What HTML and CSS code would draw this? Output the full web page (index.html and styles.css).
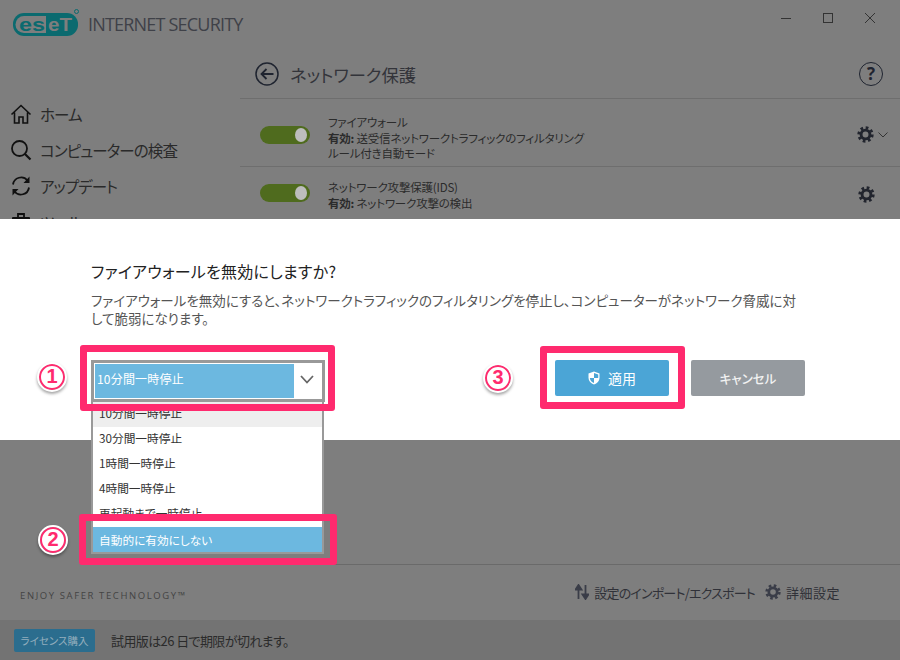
FILE: index.html
```html
<!DOCTYPE html>
<html lang="ja">
<head>
<meta charset="utf-8">
<title>ESET Internet Security</title>
<link rel="stylesheet" href="styles.css">
</head>
<body>
<svg class="defs" width="0" height="0" aria-hidden="true">
  <symbol id="gear" viewBox="0 0 20 20">
    <circle cx="10" cy="10" r="5.2" fill="none" stroke="currentColor" stroke-width="3.4"/>
    <circle cx="10" cy="10" r="8" fill="none" stroke="currentColor" stroke-width="3.2" stroke-dasharray="3.2 3.08"/>
  </symbol>
</svg>
<div class="app">
  <header class="titlebar">
    <svg class="logo" viewBox="0 0 68 28" width="68" height="28">
      <rect x="0" y="4" width="65" height="23" rx="11" fill="#0b6a6f"/>
      <path d="M11 7 H33 V24 H11 A8.500 8.500 0 0 1 11 7 Z" fill="#7e7e7e"/>
      <text class="logo-text" x="6" y="21.500" fill="#0b6a6f" textLength="26" lengthAdjust="spacingAndGlyphs">es</text>
      <text class="logo-text" x="35" y="21.500" fill="#7e7e7e" textLength="24" lengthAdjust="spacingAndGlyphs">eT</text>
      <circle cx="63.500" cy="2.500" r="2" fill="none" stroke="#0b6a6f" stroke-width="1"/>
    </svg>
    <span class="product">INTERNET SECURITY</span>
    <div class="winctl">
      <svg width="12" height="12" viewBox="0 0 12 12"><path d="M1 6.500H11" stroke="#333" fill="none"/></svg>
      <svg width="12" height="12" viewBox="0 0 12 12"><rect x="1.500" y="1.500" width="9" height="9" stroke="#333" fill="none"/></svg>
      <svg width="12" height="12" viewBox="0 0 12 12"><path d="M1 1L11 11M11 1L1 11" stroke="#333" fill="none"/></svg>
    </div>
  </header>
  <div class="middle">
    <nav class="sidebar">
      <div class="nav-item">
        <svg class="nav-icon" viewBox="0 0 22 22"><path d="M1.500 11.500L11 2.500L20.500 11.500M4.500 9.500V20H9V14H13V20H17.500V9.500" fill="none" stroke="#111" stroke-width="1.600"/></svg>
        <span>ホーム</span>
      </div>
      <div class="nav-item">
        <svg class="nav-icon" viewBox="0 0 22 22"><circle cx="9.500" cy="9.500" r="7.500" fill="none" stroke="#111" stroke-width="1.800"/><path d="M15 15L20.500 20.500" stroke="#111" stroke-width="2.200"/></svg>
        <span>コンピューターの検査</span>
      </div>
      <div class="nav-item">
        <svg class="nav-icon" viewBox="0 0 22 22"><path d="M3 9.500A8.200 8.200 0 0 1 17.500 5.500M19 12.500A8.200 8.200 0 0 1 4.500 16.500" fill="none" stroke="#111" stroke-width="1.800"/><path d="M19.500 1.500V8H13.500ZM2.500 20.500V14H8.500Z" fill="#111"/></svg>
        <span>アップデート</span>
      </div>
      <div class="nav-item">
        <svg class="nav-icon" viewBox="0 0 22 22"><rect x="2" y="6" width="18" height="13" rx="1" fill="#111"/><path d="M8 6V3H14V6" fill="none" stroke="#111" stroke-width="1.800"/></svg>
        <span>ツール</span>
      </div>
    </nav>
    <main class="content">
      <div class="page-head">
        <svg class="round-icon" viewBox="0 0 24 24"><circle cx="12" cy="12" r="11" fill="none" stroke="#1f2430" stroke-width="1.500"/><path d="M18.500 12H6.500M11.500 7L6.500 12L11.500 17" fill="none" stroke="#1f2430" stroke-width="1.800"/></svg>
        <h1 class="page-title">ネットワーク保護</h1>
        <span class="help">?</span>
      </div>
      <section class="row row-first">
        <span class="toggle"><span class="knob"></span></span>
        <div class="row-text">
          <div>ファイアウォール</div>
          <div><b>有効:</b> 送受信ネットワークトラフィックのフィルタリング</div>
          <div>ルール付き自動モード</div>
        </div>
        <svg class="row-gear"><use href="#gear"/></svg>
        <svg class="row-chevron" viewBox="0 0 10 6"><path d="M0.500 0.500L5 5L9.500 0.500" fill="none" stroke="#333"/></svg>
      </section>
      <section class="row row-second">
        <span class="toggle"><span class="knob"></span></span>
        <div class="row-text">
          <div>ネットワーク攻撃保護(IDS)</div>
          <div><b>有効:</b> ネットワーク攻撃の検出</div>
        </div>
        <svg class="row-gear gear-solo"><use href="#gear"/></svg>
      </section>
    </main>
  </div>
  <div class="promo">
    <span class="tagline">ENJOY SAFER TECHNOLOGY™</span>
    <div class="promo-links">
      <svg class="arrows" viewBox="0 0 14 16"><path d="M3.500 15V5M0.500 5.500L3.500 1L6.500 5.500ZM10.500 1V11M7.500 10.500L10.500 15L13.500 10.500Z" fill="#3a3d48" stroke="#3a3d48" stroke-width="1.800"/></svg>
      <span class="link-import">設定のインポート/エクスポート</span>
      <svg class="promo-gear"><use href="#gear"/></svg>
      <span class="link-advanced">詳細設定</span>
    </div>
  </div>
  <div class="status">
    <span class="buy">ライセンス購入</span>
    <span class="trial">試用版は26 日で期限が切れます。</span>
  </div>

  <div class="dialog">
    <h2 class="dialog-title">ファイアウォールを無効にしますか?</h2>
    <p class="dialog-body">ファイアウォールを無効にすると、ネットワークトラフィックのフィルタリングを停止し、コンピューターがネットワーク脅威に対して脆弱になります。</p>
    <div class="controls">
      <div class="select">
        <div class="select-value">10分間一時停止</div>
        <svg class="select-chevron" viewBox="0 0 14 9"><path d="M1 1L7 7.500L13 1" fill="none" stroke="#666" stroke-width="1.800"/></svg>
        <ul class="options">
          <li class="opt-hover">10分間一時停止</li>
          <li>30分間一時停止</li>
          <li>1時間一時停止</li>
          <li>4時間一時停止</li>
          <li>再起動まで一時停止</li>
          <li class="opt-selected">自動的に有効にしない</li>
        </ul>
      </div>
      <div class="buttons">
        <button class="btn btn-apply">
          <svg class="shield" viewBox="0 0 12 14"><path d="M6 0.500L11.500 2.500V6.500C11.500 10 9 12.500 6 13.500C3 12.500 0.500 10 0.500 6.500V2.500Z" fill="#fff"/><path d="M6 2V7H1.800C2 9.500 4 11.200 6 12V7H10.200C10.300 6 10.300 4.500 10.200 3.500Z" fill="#4ba5d6"/></svg>
          適用
        </button>
        <button class="btn btn-cancel">キャンセル</button>
      </div>
    </div>
  </div>

  <div class="mark mark-1"></div>
  <div class="mark mark-2"></div>
  <div class="mark mark-3"></div>
  <span class="badge badge-1">1</span>
  <span class="badge badge-2">2</span>
  <span class="badge badge-3">3</span>
</div>
</body>
</html>
```
FILE: styles.css
```css
* { box-sizing: border-box; }
html, body { margin: 0; padding: 0; }
body {
  font-family: "Noto Sans CJK JP", "Noto Sans", sans-serif;
  font-feature-settings: "palt";
  overflow: hidden;
}
.defs { position: absolute; }
.app {
  position: relative;
  width: 900px;
  height: 660px;
  background: #7e7e7e;
  display: flex;
  flex-direction: column;
  color: #2b2b2b;
  overflow: hidden;
}
.titlebar {
  height: 50px;
  display: flex;
  align-items: flex-start;
  padding: 9px 24px 0 13px;
  flex: none;
}
.logo { flex: none; }
.logo-text { font: bold 19px "Liberation Sans", sans-serif; }
.product {
  margin-left: 7px;
  padding-top: 3px;
  font: 400 18px/24px "Open Sans", sans-serif;
  letter-spacing: -0.8px;
  color: #3f4148;
}
.winctl {
  margin-left: auto;
  display: flex;
  gap: 30px;
  padding-top: 3px;
}
.middle { flex: 1; display: flex; min-height: 0; }
.sidebar {
  width: 240px;
  flex: none;
  padding: 46px 0 0 10px;
}
.nav-item {
  height: 36px;
  display: flex;
  align-items: center;
  gap: 8px;
  font-size: 15.500px;
  letter-spacing: -0.9px;
  color: #2a2a2a;
}
.nav-icon { width: 22px; height: 22px; flex: none; }
.content {
  flex: 1;
  border-bottom: 1px solid #6a6a6a;
}
.page-head {
  height: 49px;
  display: flex;
  align-items: center;
  padding: 0 17px 0 15px;
  border-bottom: 1px solid #6e6e6e;
}
.round-icon { width: 24px; height: 24px; flex: none; }
.page-title {
  margin: 0 0 0 11px;
  font-size: 17.300px;
  font-weight: 400;
  color: #33343a;
  flex: 1;
}
.help {
  width: 24px;
  height: 24px;
  border: 1.500px solid #1f2430;
  border-radius: 50%;
  font: bold 17px/21px "Open Sans", sans-serif;
  color: #1f2430;
  text-align: center;
}
.row {
  height: 68px;
  display: flex;
  align-items: flex-start;
  padding-left: 20px;
  border-bottom: 1px solid #6e6e6e;
}
.row-first { padding-top: 27px; }
.row-first .row-text { margin-top: -11px; }
.row-second { padding-top: 17px; }
.row-second .row-text { margin-top: -4px; }
.toggle {
  width: 50px;
  height: 18px;
  border-radius: 9px;
  background: #4f6b1e;
  flex: none;
  display: flex;
  align-items: center;
  justify-content: flex-end;
  padding-right: 3px;
}
.knob { width: 12px; height: 14px; border-radius: 50%; background: #bdbdbd; }
.row-text {
  margin-left: 18px;
  font-size: 11.500px;
  letter-spacing: -0.2px;
  line-height: 15.500px;
  color: #2b2b2b;
  flex: 1;
}
.row-text b { font-weight: 700; }
.row-gear { width: 17px; height: 17px; color: #22252e; flex: none; margin-left: -1px; }
.row-chevron { width: 10px; height: 6px; margin: 6px 12px 0 4px; flex: none; }
.gear-solo { margin-right: 25px; margin-top: 2px; }
.promo {
  height: 55px;
  flex: none;
  display: flex;
  align-items: center;
  padding: 0 60px 0 20px;
  justify-content: space-between;
}
.tagline {
  font: 400 9.500px "Open Sans", sans-serif;
  letter-spacing: 1.600px;
  color: #444;
  margin-top: 6px;
}
.promo-links {
  display: flex;
  align-items: center;
  font-size: 13px;
  color: #303138;
  margin-top: -1px;
}
.arrows { width: 14px; height: 16px; margin-right: 5px; }
.link-import { margin-right: 10px; letter-spacing: -0.8px; }
.link-advanced { letter-spacing: 0.500px; }
.promo-gear { width: 16px; height: 16px; color: #3a3d48; margin-right: 5px; }
.status {
  height: 40px;
  flex: none;
  background: #737373;
  display: flex;
  align-items: center;
  padding-left: 14px;
  gap: 16px;
  font-size: 13px;
  color: #2b2b2b;
}
.trial { letter-spacing: -0.600px; }
.buy {
  width: 81px;
  height: 23px;
  background: #2b6d8e;
  border-radius: 2px;
  color: #93aebd;
  font-size: 10.500px;
  line-height: 23px;
  text-align: center;
}
.dialog {
  position: absolute;
  left: 0;
  top: 219px;
  width: 900px;
  height: 221px;
  background: #fff;
  padding: 40px 95px 0 91px;
}
.dialog-title {
  margin: 0;
  font-size: 16px;
  letter-spacing: 0.250px;
  line-height: 24px;
  font-weight: 400;
  color: #222;
}
.dialog-body {
  margin: 8px 0 0;
  font-size: 13.500px;
  line-height: 18px;
  color: #555;
}
.controls {
  margin-top: 33px;
  display: flex;
  justify-content: space-between;
  align-items: flex-start;
}
.select {
  position: relative;
  width: 234px;
  height: 42px;
  border: 3px solid #999;
  padding: 1px;
}
.select-value {
  width: 199px;
  height: 34px;
  background: #6cb8e0;
  color: #fff;
  font-size: 12px;
  letter-spacing: 0.200px;
  line-height: 30px;
  padding-left: 2px;
}
.select-chevron {
  position: absolute;
  right: 8px;
  top: 12px;
  width: 14px;
  height: 9px;
}
.options {
  position: absolute;
  left: -3px;
  top: 39px;
  width: 233px;
  margin: 0;
  padding: 0;
  list-style: none;
  background: #fff;
  border: 2px solid #999;
  border-top: 0;
  z-index: 2;
  font-size: 11.700px;
  color: #333;
}
.options li {
  height: 25px;
  line-height: 21px;
  padding-left: 6px;
}
.opt-hover { background: #eee; }
.options .opt-selected { background: #6cb8e0; color: #fff; line-height: 25px; }
.buttons { display: flex; gap: 22px; }
.btn {
  width: 114px;
  height: 36px;
  border: 0;
  border-radius: 2px;
  font-family: inherit;
  font-feature-settings: inherit;
  font-size: 14px;
  color: #fff;
  display: flex;
  align-items: center;
  justify-content: center;
  gap: 8px;
  padding: 0;
}
.btn-apply { background: #4ba5d6; }
.btn-cancel { background: #959a9f; font-weight: 500; font-size: 12.500px; color: #f2f2f2; }
.shield { width: 12px; height: 14px; }
.mark {
  position: absolute;
  border: 7px solid #ff2a6e;
  border-radius: 3px;
  z-index: 3;
}
.mark-1 { left: 80px; top: 345px; width: 255px; height: 66px; }
.mark-2 { left: 79px; top: 514px; width: 258px; height: 51px; }
.mark-3 { left: 540px; top: 346px; width: 145px; height: 63px; }
.badge {
  position: absolute;
  width: 26px;
  height: 26px;
  border-radius: 50%;
  background: #fff;
  border: 2.500px solid #ff2a6e;
  outline: 2px solid #fff;
  box-shadow: 0 2px 3px 2px rgba(0, 0, 0, 0.35);
  color: #ff2a6e;
  font: bold 20px/21px "Liberation Sans", sans-serif;
  text-align: center;
  z-index: 4;
}
.badge-1 { left: 39px; top: 364px; }
.badge-2 { left: 40px; top: 527px; }
.badge-3 { left: 485px; top: 365px; }
```
